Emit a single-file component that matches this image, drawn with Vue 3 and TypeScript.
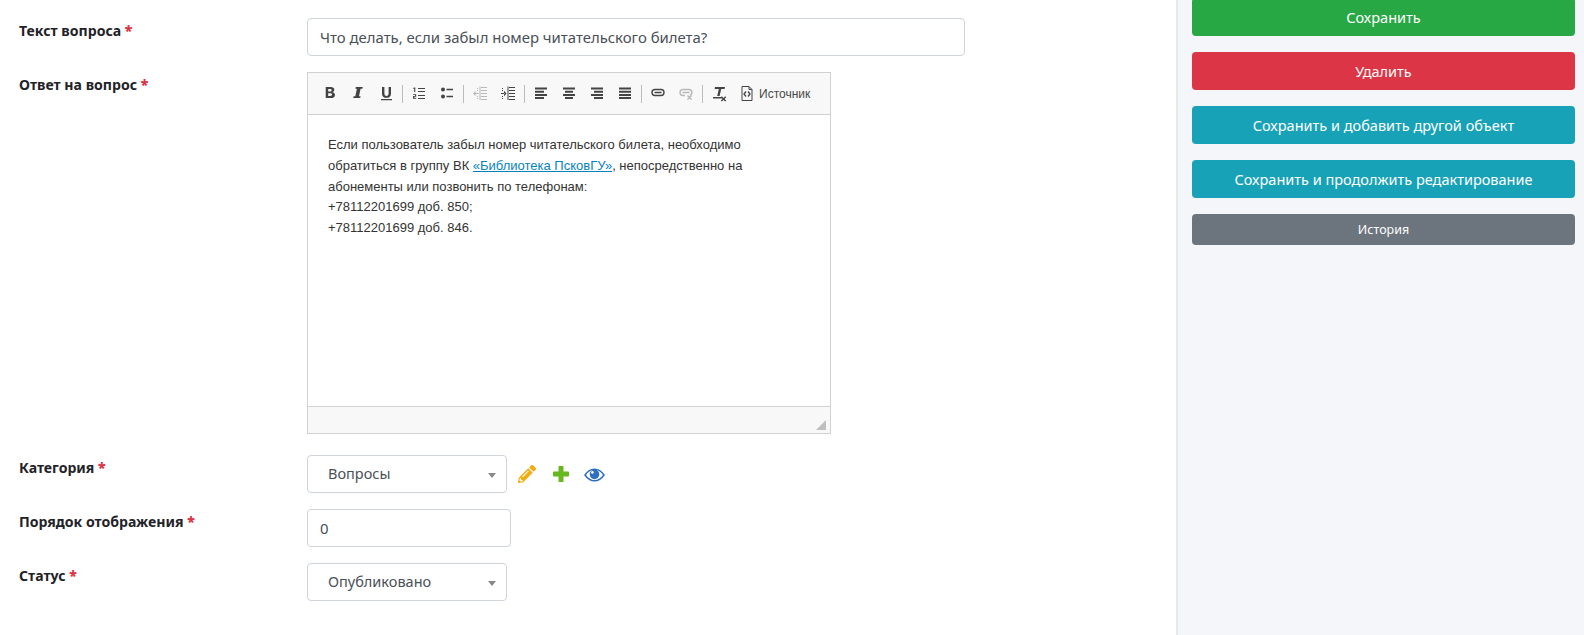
<script setup lang="ts">
const lines = ['+78112201699 доб. 850;', '+78112201699 доб. 846.']
</script>

<template>
  <div class="page">
    <main class="main">
      <div class="row">
        <label class="lbl">Текст вопроса <b>*</b></label>
        <input class="input wide" value="Что делать, если забыл номер читательского билета?" />
      </div>
      <div class="row">
        <label class="lbl">Ответ на вопрос <b>*</b></label>
        <div class="cke">
          <div class="tb">
            <span class="ic"><svg viewBox="0 0 16 16"><path fill-rule="evenodd" d="M3.700 1h5c2.300 0 3.600 1 3.600 2.800 0 1.200-.7 2-1.700 2.300v.1c1.500.3 2.400 1.300 2.400 2.700 0 2-1.500 3.100-4 3.100H3.700V1zm2.500 2v2.500h1.900c1 0 1.500-.4 1.500-1.300 0-.8-.5-1.200-1.500-1.200H6.200zm0 4.300V10h2.100c1.100 0 1.700-.5 1.700-1.400 0-.9-.6-1.300-1.800-1.300H6.200z" fill="#444"/></svg></span>
            <span class="ic"><svg viewBox="0 0 16 16"><path d="M5.800 1h7l-.4 1.800h-1.800L9 10.200h1.600l-.4 1.800h-7l.4-1.800h1.700l1.600-7.400H5.400z" fill="#444"/></svg></span>
            <span class="ic"><svg viewBox="0 0 16 16"><path d="M3 13h11v1.200H3zM4 1h2.400v6.300c0 1.800.7 2.700 2.100 2.700s2.100-.9 2.100-2.700V1H13v6.400c0 3-1.600 4.400-4.500 4.400S4 10.400 4 7.400z" fill="#444"/></svg></span>
            <i class="sep"></i>
            <span class="ic"><svg viewBox="0 0 16 16" fill="#444"><path d="M3.200 1.500h1.100v4.600H3.200V2.700H2.200V2zM7 2h7v1.100H7zM7 5h7v1.100H7zM7 9h7v1.100H7zM7 12h7v1.100H7zM2 8.200h3.200v2.500H3.200v1h2v1H2V9.900h2V9.100H2z"/></svg></span>
            <span class="ic"><svg viewBox="0 0 16 16" fill="#444"><circle cx="4" cy="3.500" r="2"/><circle cx="4" cy="10.500" r="2"/><path d="M7.500 2.800H14v1.400H7.500zM7.500 9.800H14v1.400H7.500z"/></svg></span>
            <i class="sep"></i>
            <span class="ic dim"><svg viewBox="0 0 16 16" fill="#444"><path d="M9 1h6v1H9zM9 4h6v1H9zM9 7h6v1H9zM9 10h6v1H9zM9 13h6v1H9zM7.500 .5h1V14h-1zM2.500 7h4v1h-4zM3.500 4.800v5.400L1 7.500zM5 2h1v1H5zM5 4h1v1H5zM5 10h1v1H5zM5 12h1v1H5z"/></svg></span>
            <span class="ic"><svg viewBox="0 0 16 16" fill="#444"><path d="M9 1h6v1H9zM9 4h6v1H9zM9 7h6v1H9zM9 10h6v1H9zM9 13h6v1H9zM7.500 .5h1V14h-1zM1 7h3.500v1H1zM4 4.800v5.400L6.500 7.500zM2 2h1v1H2zM2 4h1v1H2zM2 10h1v1H2zM2 12h1v1H2z"/></svg></span>
            <i class="sep"></i>
            <span class="ic"><svg viewBox="0 0 16 16" fill="#444"><path d="M2 1.500h12v2H2zM2 4.700h9v2H2zM2 7.900h12v2H2zM2 11h9v2H2z"/></svg></span>
            <span class="ic"><svg viewBox="0 0 16 16" fill="#444"><path d="M2 1.500h12v2H2zM4 4.700h8v2H4zM2 7.900h12v2H2zM4 11h8v2H4z"/></svg></span>
            <span class="ic"><svg viewBox="0 0 16 16" fill="#444"><path d="M2 1.500h12v2H2zM5 4.700h9v2H5zM2 7.900h12v2H2zM5 11h9v2H5z"/></svg></span>
            <span class="ic"><svg viewBox="0 0 16 16" fill="#444"><path d="M2 1.500h12v2H2zM2 4.700h12v2H2zM2 7.900h12v2H2zM2 11h12v2H2z"/></svg></span>
            <i class="sep"></i>
            <span class="ic"><svg viewBox="0 0 16 16"><path d="M5 3.500h6a3 3 0 0 1 0 6H5a3 3 0 0 1 0-6zM4.500 6.500h7" fill="none" stroke="#444" stroke-width="1.400"/></svg></span>
            <span class="ic dim"><svg viewBox="0 0 16 16"><path d="M5 3.500h6a3 3 0 0 1 1 5.800M7 9.500H5a3 3 0 0 1 0-6M4.500 6.500h7" fill="none" stroke="#444" stroke-width="1.400"/><path d="M9.500 9.500l4 4M13.500 9.500l-4 4" stroke="#444" stroke-width="1.500"/></svg></span>
            <i class="sep"></i>
            <span class="ic"><svg viewBox="0 0 16 16" fill="#444"><path d="M4 1h10l-.4 2H10.200L8.600 10H6.200l1.600-7H3.600zM2 11h8.500v1.500H2zM10.800 10.200l1.700 1.700 1.700-1.700 1 1-1.700 1.700 1.700 1.700-1 1-1.700-1.700-1.700 1.700-1-1 1.700-1.700-1.700-1.700z"/></svg></span>
            <span class="ic src"><svg viewBox="0 0 16 16"><path d="M3 .5h7l3 3v11H3z" fill="none" stroke="#444" stroke-width="1"/><path d="M10 .5v3h3" fill="none" stroke="#444"/><path d="M7 5.500L5 8l2 2.500M9 5.500l2 2.500-2 2.500" fill="none" stroke="#444" stroke-width="1.300"/></svg><em>Источник</em></span>
          </div>
          <div class="body">
            <p>Если пользователь забыл номер читательского билета, необходимо обратиться в группу ВК <a>«Библиотека ПсковГУ»</a>, непосредственно на абонементы или позвонить по телефонам:<br />{{ lines[0] }}<br />{{ lines[1] }}</p>
          </div>
          <div class="foot"><i class="grip"></i></div>
        </div>
      </div>
      <div class="row cat">
        <label class="lbl">Категория <b>*</b></label>
        <div class="select"><span>Вопросы</span></div>
        <svg class="act pencil" viewBox="0 0 512 512"><path fill="#f0ad14" d="M497.9 142.1l-46.1 46.1c-4.700 4.700-12.300 4.700-17 0l-111-111c-4.700-4.700-4.700-12.300 0-17l46.100-46.100c18.700-18.700 49.100-18.700 67.900 0l60.100 60.100c18.800 18.700 18.800 49.100 0 67.900zM284.200 99.800L21.600 362.400.4 483.900c-2.900 16.400 11.400 30.600 27.800 27.800l121.500-21.300 262.600-262.600c4.700-4.700 4.700-12.300 0-17l-111-111c-4.800-4.700-12.400-4.700-17.100 0zM124.100 339.900c-5.500-5.500-5.500-14.300 0-19.800l154-154c5.500-5.500 14.300-5.500 19.800 0s5.500 14.300 0 19.800l-154 154c-5.500 5.500-14.300 5.500-19.800 0zM88 424h48v36.300l-64.500 11.300-31.100-31.100L51.700 376H88v48z"/></svg>
        <svg class="act plus" viewBox="0 0 16 16"><path fill="#66b81e" d="M6.200 0h3.600a.7.7 0 0 1 .7.7v4.800h4.800a.7.7 0 0 1 .7.7v3.600a.7.7 0 0 1-.7.7h-4.800v4.800a.7.7 0 0 1-.7.7H6.200a.7.7 0 0 1-.7-.7v-4.800H.7a.7.7 0 0 1-.7-.7V6.200a.7.7 0 0 1 .7-.7h4.800V.7a.7.7 0 0 1 .7-.7z"/></svg>
        <svg class="act eye" viewBox="0 0 21 14"><path d="M1 7C3.500 3.300 6.800 1.200 10.500 1.200S17.500 3.300 20 7c-2.500 3.700-5.800 5.800-9.500 5.800S3.500 10.700 1 7z" fill="none" stroke="#2f6fc0" stroke-width="1.500"/><circle cx="10.500" cy="6.400" r="4.800" fill="#2f6fc0"/><circle cx="8.400" cy="4.400" r="1.300" fill="#fff"/></svg>
      </div>
      <div class="row">
        <label class="lbl">Порядок отображения <b>*</b></label>
        <input class="input num" value="0" />
      </div>
      <div class="row">
        <label class="lbl">Статус <b>*</b></label>
        <div class="select"><span>Опубликовано</span></div>
      </div>
    </main>
    <aside class="side">
      <button class="btn green">Сохранить</button>
      <button class="btn red">Удалить</button>
      <button class="btn teal">Сохранить и добавить другой объект</button>
      <button class="btn teal">Сохранить и продолжить редактирование</button>
      <button class="btn gray">История</button>
    </aside>
  </div>
</template>

<style>
html, body { margin: 0; background: #fff; overflow: hidden; }
</style>

<style scoped>
.page { display: flex; height: 635px; overflow: hidden; font-family: "Noto Sans", sans-serif; color: #212529; }
.main { width: 1176px; flex: none; box-sizing: border-box; padding: 18px 0 0 19px; background: #fff; }
.row { display: flex; align-items: flex-start; margin-bottom: 16px; }
.lbl { width: 288px; flex: none; font-size: 14.100px; font-weight: 700; line-height: 24px; padding-top: 1px; color: #1f2328; }
.lbl b { color: #dc3545; }
.input { box-sizing: border-box; height: 38px; border: 1px solid #ced4da; border-radius: 4px; padding: 0 12px; font: 14.900px "Noto Sans", sans-serif; color: #495057; outline: none; background: #fff; }
.wide { width: 658px; }
.num { width: 204px; }
.cke { width: 524px; height: 362px; box-sizing: border-box; border: 1px solid #d1d1d1; display: flex; flex-direction: column; }
.tb { height: 42px; flex: none; box-sizing: border-box; background: #f8f8f8; border-bottom: 1px solid #d1d1d1; display: flex; align-items: center; padding: 1px 0 0 8px; }
.ic { width: 28px; height: 28px; flex: none; display: flex; align-items: center; justify-content: center; }
.ic svg { width: 16px; height: 16px; display: block; flex: none; }
.dim { opacity: .35; }
.sep { width: 1px; height: 18px; background: #bcbcbc; margin: 0 2px; flex: none; }
.src { width: auto; margin-left: 6px; gap: 4px; }
.src em { font: normal 12px "Liberation Sans", sans-serif; color: #484848; }
.body { flex: 1; box-sizing: border-box; padding: 20px; font: 13px/20.800px "Liberation Sans", Arial, sans-serif; color: #333; background: #fff; }
.body p { margin: 0; }
.body a { color: #0782c1; text-decoration: underline; }
.foot { height: 26px; flex: none; position: relative; background: #f8f8f8; border-top: 1px solid #d1d1d1; }
.grip { position: absolute; right: 4px; bottom: 3px; width: 0; height: 0; border-style: solid; border-width: 0 0 10px 10px; border-color: transparent transparent #bfbfbf transparent; }
.cat { margin-top: 21px; align-items: flex-start; }
.select { box-sizing: border-box; width: 200px; height: 38px; border: 1px solid #ced4da; border-radius: 4px; padding: 0 0 2px 20px; display: flex; align-items: center; font-size: 14.500px; color: #495057; position: relative; background: #fff; }
.select::after { content: ""; position: absolute; right: 10px; top: 17px; border-style: solid; border-width: 5px 4px 0 4px; border-color: #888 transparent transparent transparent; }
.act { display: block; flex: none; }
.pencil { width: 18px; height: 18px; margin: 10px 0 0 11px; }
.plus { width: 16px; height: 16px; margin: 11px 0 0 17px; }
.eye { width: 21px; height: 14px; margin: 13px 0 0 15px; }
.side { flex: 1; box-sizing: border-box; background: #f4f6f9; border-left: 2px solid #e6e8ec; padding: 0 9px 0 14px; display: flex; flex-direction: column; gap: 16px; margin-top: 0; }
.btn { display: block; width: 100%; height: 38px; border: 0; border-radius: 4px; color: #fff; font: 14.500px "Noto Sans", sans-serif; padding: 0; flex: none; }
.btn:first-child { margin-top: -2px; }
.green { background: #28a745; }
.red { background: #dc3545; }
.teal { background: #17a2b8; }
.gray { background: #6c757d; height: 31px; font-size: 12.500px; }
</style>
